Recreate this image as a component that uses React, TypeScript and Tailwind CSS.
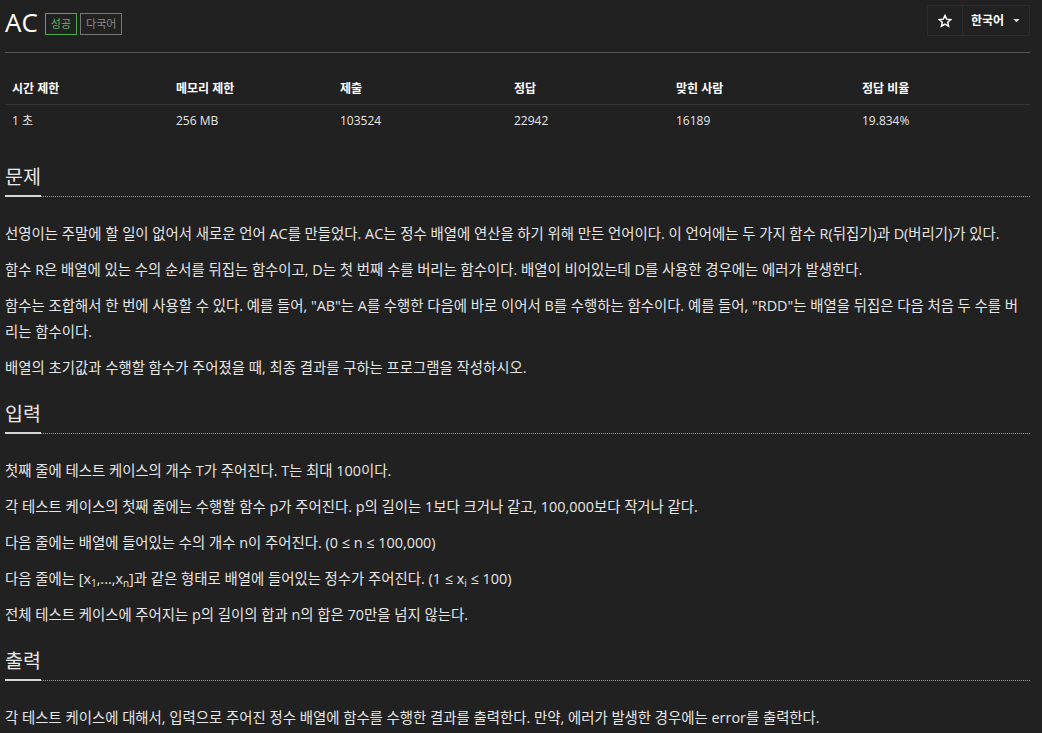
import React from "react";

const font = { fontFamily: '"Open Sans", "Noto Sans CJK KR", sans-serif' };

function Heading({ children }: { children: React.ReactNode }) {
  return (
    <div className="mt-[20px] border-b border-dotted border-[#9a9a9a] mb-[24px]">
      <h2 className="text-[19.5px] leading-[26px] text-[#e8e8e8] inline-block border-b-2 border-[#d6d6d6] pb-[5px] -mb-px">
        {children}
      </h2>
    </div>
  );
}

function P({ children }: { children: React.ReactNode }) {
  return <p className="text-[14.4px] leading-[26px] text-[#e6e6e6] mb-[10px] break-all">{children}</p>;
}

export default function App() {
  const heads = ["시간 제한", "메모리 제한", "제출", "정답", "맞힌 사람", "정답 비율"];
  const vals = ["1 초", "256 MB", "103524", "22942", "16189", "19.834%"];
  const widths = ["w-[164px]", "w-[164px]", "w-[174px]", "w-[162px]", "w-[186px]", "w-[175px]"];
  return (
    <div className="min-h-[733px] bg-[#212121] text-[#e6e6e6]" style={font}>
      <div className="pl-[5px] pr-[12px] pt-[5px]">
        <div className="flex items-start justify-between border-b border-[#555] pb-[15px]">
          <div className="flex items-center pt-[2px]">
            <h1 className="text-[26px] leading-[30px] text-white font-normal">AC</h1>
            <span className="ml-[7px] mt-[3px] border border-[#4cae4c] text-[#5cb85c] text-[11px] leading-[14px] px-[5px] py-[3px]">성공</span>
            <span className="ml-[3px] mt-[3px] border border-[#777] text-[#888] text-[11px] leading-[14px] px-[5px] py-[3px]">다국어</span>
          </div>
          <div className="flex">
            <div className="w-[36px] h-[31px] border border-[#2c2c2c] flex items-center justify-center">
              <svg width="14" height="14" viewBox="0 0 24 24" fill="none" stroke="#fff" strokeWidth="2.6" strokeLinejoin="miter">
                <path d="M12 2.5l2.9 6.3 6.9.7-5.2 4.6 1.5 6.8L12 17.4l-6.1 3.5 1.5-6.8L2.2 9.5l6.9-.7z" />
              </svg>
            </div>
            <div className="h-[31px] border border-[#2c2c2c] border-l-0 flex items-center pl-[8px] pr-[9px]">
              <span className="text-[12px] font-bold text-white">한국어</span>
              <svg className="ml-[9px]" width="7" height="4" viewBox="0 0 8 5"><path d="M0 0h8L4 4z" fill="#ddd" /></svg>
            </div>
          </div>
        </div>

        <table className="mt-[19px] w-full text-[12px] border-collapse">
          <thead>
            <tr className="border-b border-[#333]">
              {heads.map((h, i) => (
                <th key={h} className={`${widths[i]} text-left font-bold text-white px-[7px] pt-[8px] pb-[7px] leading-[17px]`}>{h}</th>
              ))}
            </tr>
          </thead>
          <tbody>
            <tr>
              {vals.map((v) => (
                <td key={v} className="text-left text-[#e6e6e6] px-[7px] pt-[7px] pb-[8px] leading-[17px]">{v}</td>
              ))}
            </tr>
          </tbody>
        </table>

        <div className="h-[7px]" />
        <Heading>문제</Heading>
        <P>선영이는 주말에 할 일이 없어서 새로운 언어 AC를 만들었다. AC는 정수 배열에 연산을 하기 위해 만든 언어이다. 이 언어에는 두 가지 함수 R(뒤집기)과 D(버리기)가 있다.</P>
        <P>함수 R은 배열에 있는 수의 순서를 뒤집는 함수이고, D는 첫 번째 수를 버리는 함수이다. 배열이 비어있는데 D를 사용한 경우에는 에러가 발생한다.</P>
        <P>함수는 조합해서 한 번에 사용할 수 있다. 예를 들어, "AB"는 A를 수행한 다음에 바로 이어서 B를 수행하는 함수이다. 예를 들어, "RDD"는 배열을 뒤집은 다음 처음 두 수를 버리는 함수이다.</P>
        <P>배열의 초기값과 수행할 함수가 주어졌을 때, 최종 결과를 구하는 프로그램을 작성하시오.</P>

        <Heading>입력</Heading>
        <P>첫째 줄에 테스트 케이스의 개수 T가 주어진다. T는 최대 100이다.</P>
        <P>각 테스트 케이스의 첫째 줄에는 수행할 함수 p가 주어진다. p의 길이는 1보다 크거나 같고, 100,000보다 작거나 같다.</P>
        <P>다음 줄에는 배열에 들어있는 수의 개수 n이 주어진다. (0 ≤ n ≤ 100,000)</P>
        <P>다음 줄에는 [x<sub className="text-[10px]">1</sub>,...,x<sub className="text-[10px]">n</sub>]과 같은 형태로 배열에 들어있는 정수가 주어진다. (1 ≤ x<sub className="text-[10px]">i</sub> ≤ 100)</P>
        <P>전체 테스트 케이스에 주어지는 p의 길이의 합과 n의 합은 70만을 넘지 않는다.</P>

        <Heading>출력</Heading>
        <P>각 테스트 케이스에 대해서, 입력으로 주어진 정수 배열에 함수를 수행한 결과를 출력한다. 만약, 에러가 발생한 경우에는 error를 출력한다.</P>
      </div>
    </div>
  );
}
